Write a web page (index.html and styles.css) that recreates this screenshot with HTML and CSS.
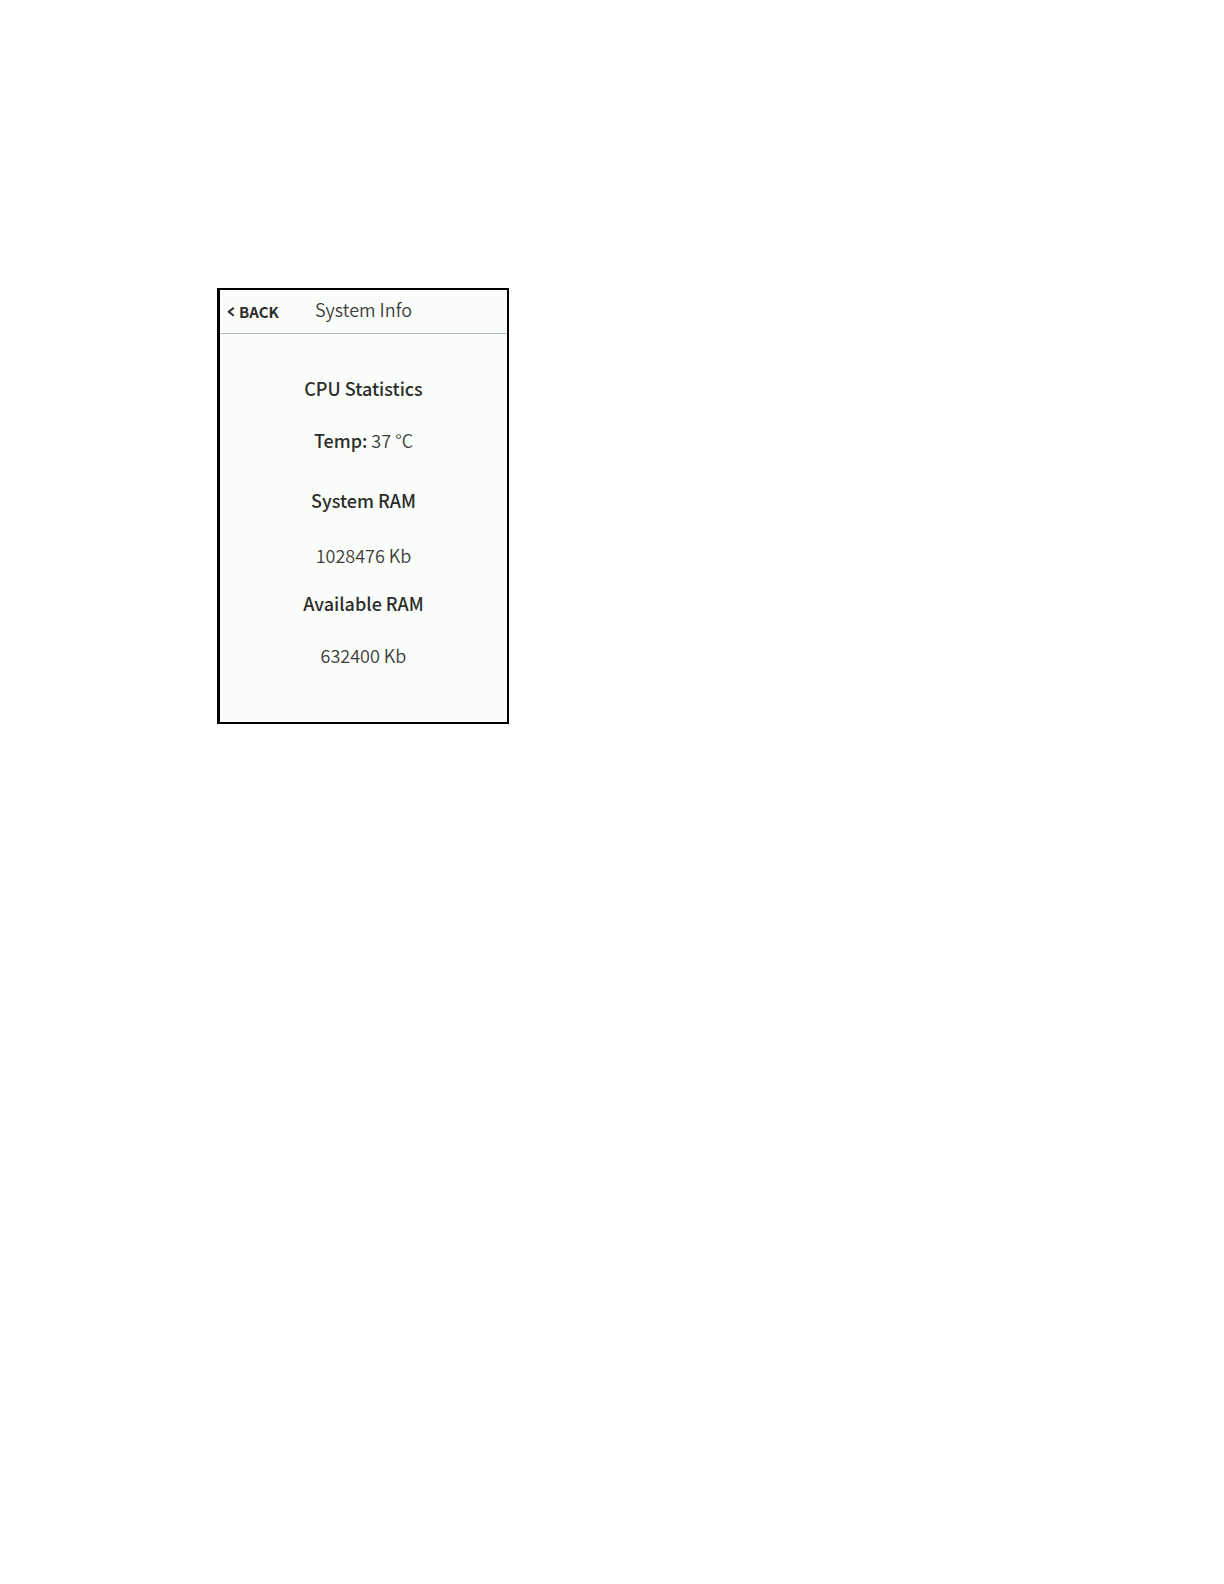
FILE: index.html
```
<!DOCTYPE html>
<html lang="en">
<head>
  <meta charset="UTF-8" />
  <meta name="viewport" content="width=device-width, initial-scale=1.0">
  <title>System Info</title>
  <link rel="stylesheet" href="styles.css">
</head>
<body>

  <div class="screen">
    <header class="header">
      <button class="back-btn" type="button">
        <svg class="back-icon" viewBox="0 0 8 10" aria-hidden="true"><path d="M6.8 0.9 L1.8 4.8 L6.8 8.7" /></svg>
        <span>BACK</span>
      </button>
      <h1 class="title">System Info</h1>
    </header>

    <main class="stats">
      <section class="stat">
        <h2>CPU Statistics</h2>
        <p><strong>Temp:</strong> 37 °C</p>
      </section>

      <section class="stat total-ram">
        <h2>System RAM</h2>
        <p>1028476 Kb</p>
      </section>

      <section class="stat">
        <h2>Available RAM</h2>
        <p>632400 Kb</p>
      </section>
    </main>
  </div>

</body>
</html>
```
FILE: styles.css
```
* {
  box-sizing: border-box;
}

body {
  font-family: "Noto Sans CJK SC", "Open Sans", sans-serif;
  font-size: 18px;
  font-weight: 350;
  line-height: 24px;
  background: #ffffff;
  color: #3c3e3c;
  margin: 0;
  padding: 288px 24px 24px 217px;
}

h1, h2, p {
  font-size: 18px;
  margin: 0;
}

.screen {
  max-width: 292px;
  background: #fbfdfa;
  border: 2px solid #000000;
  border-left-width: 3px;
}

/* equal side columns keep the title centered */
.header {
  display: grid;
  grid-template-columns: 1fr auto 1fr;
  align-items: baseline;
  height: 44px;
  padding-top: 7px;
  border-bottom: 1px solid #b4b8b4;
}

.back-btn {
  display: flex;
  align-items: center;
  gap: 4px;
  padding: 0 0 0 7px;
  font-family: inherit;
  font-size: 15px;
  font-weight: bold;
  line-height: 24px;
  color: #2c2e2c;
  background: none;
  border: none;
  cursor: pointer;
}

.back-icon {
  width: 8px;
  height: 10px;
  fill: none;
  stroke: #2c2e2c;
  stroke-width: 2;
}

.title {
  font-weight: 350;
}

.stats {
  padding: 42px 8px 55px;
  text-align: center;
}

.stat {
  display: flex;
  flex-direction: column;
  gap: 28px;
}

.total-ram {
  gap: 31px;
  margin: 36px 0 24px;
}

.stat h2,
.stat strong {
  font-weight: 500;
  color: #2c2e2c;
}
```
